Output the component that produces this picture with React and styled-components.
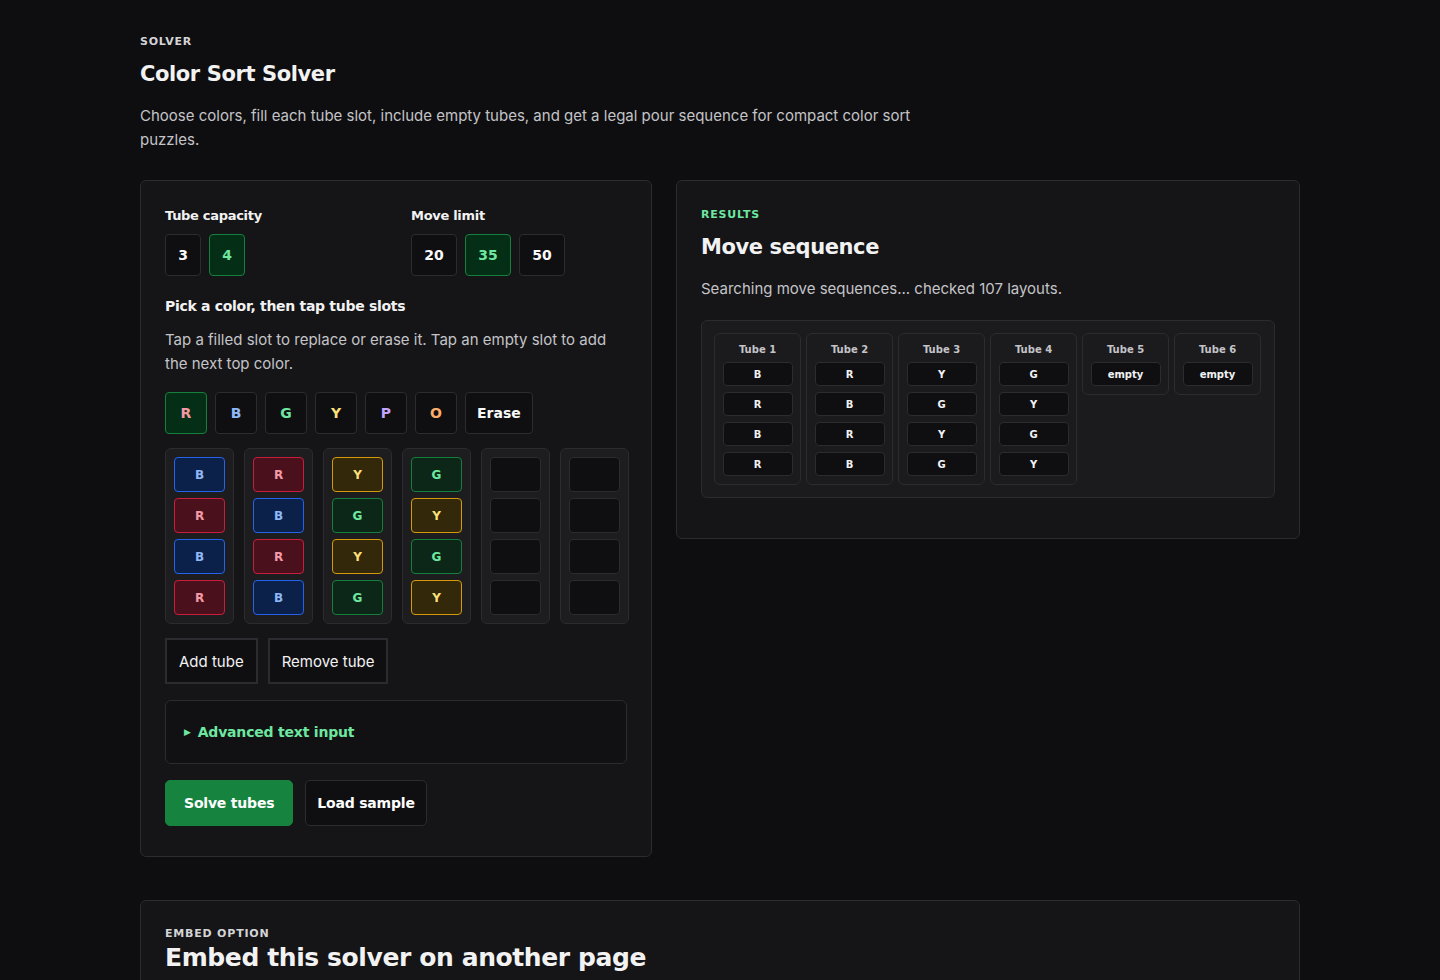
import styled, { createGlobalStyle } from "styled-components";

const Global = createGlobalStyle`
  body { margin: 0; background: #0e0e10; color: #f2f2f3; font-family: Inter, "Noto Sans", sans-serif; }
`;

const HEAD = `"DejaVu Sans", Inter, sans-serif`;

const COLORS = {
  R: { bg: "#4a111d", border: "#c81e3c", fg: "#f49aa6" },
  B: { bg: "#0b2149", border: "#2563eb", fg: "#8fb8f8" },
  G: { bg: "#0c2618", border: "#15803d", fg: "#6ee7a0" },
  Y: { bg: "#34280a", border: "#d49a0a", fg: "#fde07a" },
  P: { fg: "#c4a5fd" },
  O: { fg: "#fdae6b" },
};

const Page = styled.div`
  width: 1160px;
  margin: 0 auto;
  padding-top: 35px;
  height: 980px;
  overflow: hidden;
  box-sizing: border-box;
`;
const Eyebrow = styled.div`
  font-family: ${HEAD};
  font-size: 11px;
  font-weight: 700;
  letter-spacing: 0.8px;
  color: ${(p) => p.$color || "#d4d4d8"};
`;
const Title = styled.h1`
  font-family: ${HEAD};
  font-size: ${(p) => p.$size || 21}px;
  font-weight: 700;
  margin: ${(p) => p.$m || "14px 0 0"};
  letter-spacing: -0.4px;
`;
const Lead = styled.p`
  font-size: 15px;
  line-height: 24px;
  color: #c4c4c8;
  max-width: 780px;
  margin: ${(p) => p.$m || "18px 0 0"};
`;
const Columns = styled.div`
  display: flex;
  gap: 24px;
  align-items: flex-start;
  margin-top: 28px;
`;
const Card = styled.section`
  background: #151517;
  border: 1px solid #2b2b30;
  border-radius: 6px;
  padding: ${(p) => p.$pad || "27px 24px 30px"};
  box-sizing: border-box;
  width: ${(p) => p.$w || "auto"};
  flex: ${(p) => (p.$w ? "none" : "1")};
  margin-top: ${(p) => p.$mt || 0}px;
`;
const Row = styled.div`
  display: flex;
  gap: ${(p) => p.$gap || 8}px;
  margin-top: ${(p) => p.$mt || 0}px;
  align-items: flex-start;
`;
const Group = styled.div`
  width: ${(p) => p.$w || "auto"};
`;
const Label = styled.div`
  font-family: ${HEAD};
  font-size: 13px;
  font-weight: 700;
  letter-spacing: -0.3px;
  margin-bottom: 11px;
`;
const Chip = styled.button`
  font-family: ${HEAD};
  font-weight: 700;
  font-size: 14px;
  height: 42px;
  min-width: ${(p) => p.$minw || 36}px;
  padding: 0 11px;
  border-radius: 4px;
  border: 1px solid ${(p) => (p.$active ? "#15803d" : "#2b2b30")};
  background: ${(p) => (p.$active ? "#052e16" : "#0f0f12")};
  color: ${(p) => p.$fg || (p.$active ? "#6ee7a0" : "#fafafa")};
`;
const SubHead = styled.h3`
  font-family: ${HEAD};
  font-size: 14px;
  font-weight: 700;
  letter-spacing: -0.3px;
  margin: 22px 0 0;
`;
const Tubes = styled.div`
  display: flex;
  gap: 10px;
  margin-top: 14px;
`;
const Tube = styled.div`
  display: flex;
  flex-direction: column;
  gap: 6px;
  padding: 8px;
  background: #1d1d20;
  border: 1px solid #2b2b30;
  border-radius: 6px;
`;
const Slot = styled.div`
  width: 51px;
  height: 35px;
  box-sizing: border-box;
  border-radius: 4px;
  display: flex;
  align-items: center;
  justify-content: center;
  font-family: ${HEAD};
  font-weight: 700;
  font-size: 12px;
  background: ${(p) => (p.$c ? COLORS[p.$c].bg : "#0f0f12")};
  border: 1px solid ${(p) => (p.$c ? COLORS[p.$c].border : "#2b2b30")};
  color: ${(p) => (p.$c ? COLORS[p.$c].fg : "transparent")};
`;
const PlainButton = styled.button`
  height: 46px;
  padding: 0 12px;
  background: #0f0f12;
  border: 2px solid #2b2b30;
  color: #f2f2f3;
  font-family: Inter, sans-serif;
  font-size: 15px;
`;
const Details = styled.div`
  margin-top: 16px;
  border: 1px solid #2b2b30;
  border-radius: 6px;
  height: 62px;
  display: flex;
  align-items: center;
  padding: 0 18px;
  background: #111113;
  font-family: ${HEAD};
  font-weight: 700;
  font-size: 14px;
  letter-spacing: -0.2px;
  color: #6ee7a0;
  gap: 7px;
`;
const Tri = styled.span`
  font-size: 9px;
`;
const Action = styled.button`
  height: 46px;
  padding: 0 ${(p) => (p.$primary ? 18 : 11)}px;
  border-radius: 5px;
  font-family: ${HEAD};
  font-weight: 700;
  font-size: 14px;
  letter-spacing: -0.2px;
  border: 1px solid ${(p) => (p.$primary ? "#16843f" : "#2b2b30")};
  background: ${(p) => (p.$primary ? "#16843f" : "#0f0f12")};
  color: #fff;
`;
const ResultBox = styled.div`
  margin-top: 19px;
  padding: 12px;
  border: 1px solid #2b2b30;
  border-radius: 6px;
  background: #1b1b1e;
  display: flex;
  gap: 5px;
  align-items: flex-start;
`;
const RTube = styled.div`
  width: 87px;
  box-sizing: border-box;
  padding: 10px 8px 8px;
  border: 1px solid #2b2b30;
  border-radius: 6px;
  display: flex;
  flex-direction: column;
  align-items: center;
  gap: 6px;
`;
const RTitle = styled.div`
  font-family: ${HEAD};
  font-size: 10px;
  font-weight: 700;
  color: #c4c4c8;
  margin-bottom: 1px;
`;
const RSlot = styled.div`
  width: 70px;
  height: 24px;
  box-sizing: border-box;
  border: 1px solid #2b2b30;
  border-radius: 4px;
  background: #0f0f12;
  display: flex;
  align-items: center;
  justify-content: center;
  font-family: ${HEAD};
  font-size: 10px;
  font-weight: 700;
`;
const Spacer = styled.div`
  height: 16px;
`;

const tubes = [
  ["B", "R", "B", "R"],
  ["R", "B", "R", "B"],
  ["Y", "G", "Y", "G"],
  ["G", "Y", "G", "Y"],
  [null, null, null, null],
  [null, null, null, null],
];

export default function App() {
  return (
    <Page>
      <Global />
      <Eyebrow>SOLVER</Eyebrow>
      <Title>Color Sort Solver</Title>
      <Lead>
        Choose colors, fill each tube slot, include empty tubes, and get a legal pour sequence for compact color sort
        puzzles.
      </Lead>
      <Columns>
        <Card $w="512px">
          <Row $gap={0}>
            <Group $w="238px">
              <Label>Tube capacity</Label>
              <Row>
                <Chip>3</Chip>
                <Chip $active>4</Chip>
              </Row>
            </Group>
            <Group>
              <Label>Move limit</Label>
              <Row>
                {["20", "35", "50"].map((v) => (
                  <Chip key={v} $minw={46} $active={v === "35"}>{v}</Chip>
                ))}
              </Row>
            </Group>
          </Row>
          <SubHead>Pick a color, then tap tube slots</SubHead>
          <Lead $m="14px 0 0">Tap a filled slot to replace or erase it. Tap an empty slot to add the next top color.</Lead>
          <Row $mt={16}>
            {["R", "B", "G", "Y", "P", "O"].map((c) => (
              <Chip key={c} $minw={42} $active={c === "R"} $fg={COLORS[c].fg}>{c}</Chip>
            ))}
            <Chip>Erase</Chip>
          </Row>
          <Tubes>
            {tubes.map((t, i) => (
              <Tube key={i}>
                {t.map((c, j) => (
                  <Slot key={j} $c={c}>{c}</Slot>
                ))}
              </Tube>
            ))}
          </Tubes>
          <Row $gap={10} $mt={14}>
            <PlainButton>Add tube</PlainButton>
            <PlainButton>Remove tube</PlainButton>
          </Row>
          <Details><Tri>▶</Tri>Advanced text input</Details>
          <Row $gap={12} $mt={16}>
            <Action $primary>Solve tubes</Action>
            <Action>Load sample</Action>
          </Row>
        </Card>
        <Card $pad="27px 24px 24px">
          <Eyebrow $color="#6ee7a0">RESULTS</Eyebrow>
          <Title $m="14px 0 0">Move sequence</Title>
          <Lead $m="18px 0 0">Searching move sequences... checked 107 layouts.</Lead>
          <ResultBox>
            {tubes.map((t, i) => (
              <RTube key={i}>
                <RTitle>Tube {i + 1}</RTitle>
                {t[0] ? t.map((c, j) => <RSlot key={j}>{c}</RSlot>) : <RSlot>empty</RSlot>}
              </RTube>
            ))}
          </ResultBox>
          <Spacer />
        </Card>
      </Columns>
      <Card $mt={43} $pad="26px 24px 24px">
        <Eyebrow>EMBED OPTION</Eyebrow>
        <Title $size={25} $m="3px 0 0">Embed this solver on another page</Title>
        <Lead $m="4px 0 0">
          Use the tool-only page when you want the solver inside another site, resource page, or focused landing page.
        </Lead>
      </Card>
    </Page>
  );
}
